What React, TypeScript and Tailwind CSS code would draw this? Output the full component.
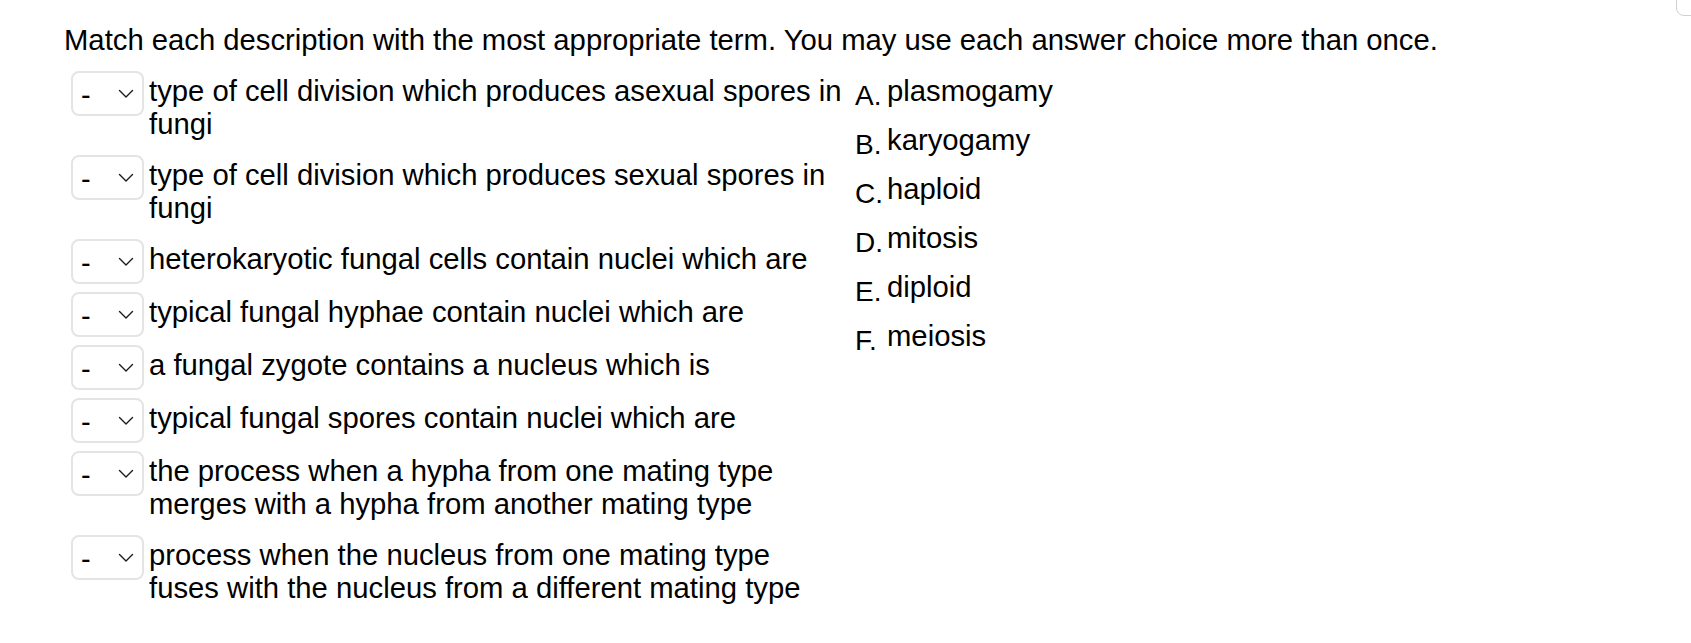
import React from "react";

type Item = { text: string[] };

const items: Item[] = [
  { text: ["type of cell division which produces asexual spores in", "fungi"] },
  { text: ["type of cell division which produces sexual spores in", "fungi"] },
  { text: ["heterokaryotic fungal cells contain nuclei which are"] },
  { text: ["typical fungal hyphae contain nuclei which are"] },
  { text: ["a fungal zygote contains a nucleus which is"] },
  { text: ["typical fungal spores contain nuclei which are"] },
  {
    text: [
      "the process when a hypha from one mating type",
      "merges with a hypha from another mating type",
    ],
  },
  {
    text: [
      "process when the nucleus from one mating type",
      "fuses with the nucleus from a different mating type",
    ],
  },
];

const answers = [
  ["A.", "plasmogamy"],
  ["B.", "karyogamy"],
  ["C.", "haploid"],
  ["D.", "mitosis"],
  ["E.", "diploid"],
  ["F.", "meiosis"],
];

function Chevron() {
  return (
    <svg width="16" height="10" viewBox="0 0 16 10" fill="none" aria-hidden="true">
      <polyline
        points="1.5,1.5 8,8 14.5,1.5"
        stroke="#1a1a1a"
        strokeWidth="1.4"
        strokeLinecap="round"
        strokeLinejoin="round"
      />
    </svg>
  );
}

function FakeSelect() {
  return (
    <div className="flex h-[45px] w-[73px] shrink-0 items-center justify-between rounded-lg border-2 border-[#e4e4e4] bg-white pl-[8px] pr-[8px]">
      <span className="pt-[4px] text-[29px] leading-none">-</span>
      <Chevron />
    </div>
  );
}

export default function App() {
  return (
    <div
      className="relative min-h-[643px] w-full overflow-hidden bg-white text-black"
      style={{ fontFamily: '"Liberation Sans", Arial, Helvetica, sans-serif' }}
    >
      <div className="absolute left-[1676px] top-[-24px] h-[40px] w-[60px] rounded-lg border border-[#d0d0d0]" />

      <div className="pl-[64px] pt-[24px] text-[29.25px] leading-[33px]">
        <p>Match each description with the most appropriate term. You may use each answer choice more than once.</p>

        <div className="mt-[14px] flex items-start">
          <div className="flex flex-col gap-[8px] pl-[7px]">
            {items.map((it, i) => (
              <div key={i} className="flex items-start gap-[5px]">
                <FakeSelect />
                <div className="w-[706px] pb-[6px] pt-[4px]">
                  {it.text.map((line, j) => (
                    <div key={j}>{line}</div>
                  ))}
                </div>
              </div>
            ))}
          </div>

          <div className="flex flex-col gap-[16px] pt-[4px]">
            {answers.map(([letter, term]) => (
              <div key={letter} className="flex h-[33px] items-baseline">
                <span className="w-[32px] shrink-0 translate-y-[4px] text-[28px]">{letter}</span>
                <span>{term}</span>
              </div>
            ))}
          </div>
        </div>
      </div>
    </div>
  );
}
